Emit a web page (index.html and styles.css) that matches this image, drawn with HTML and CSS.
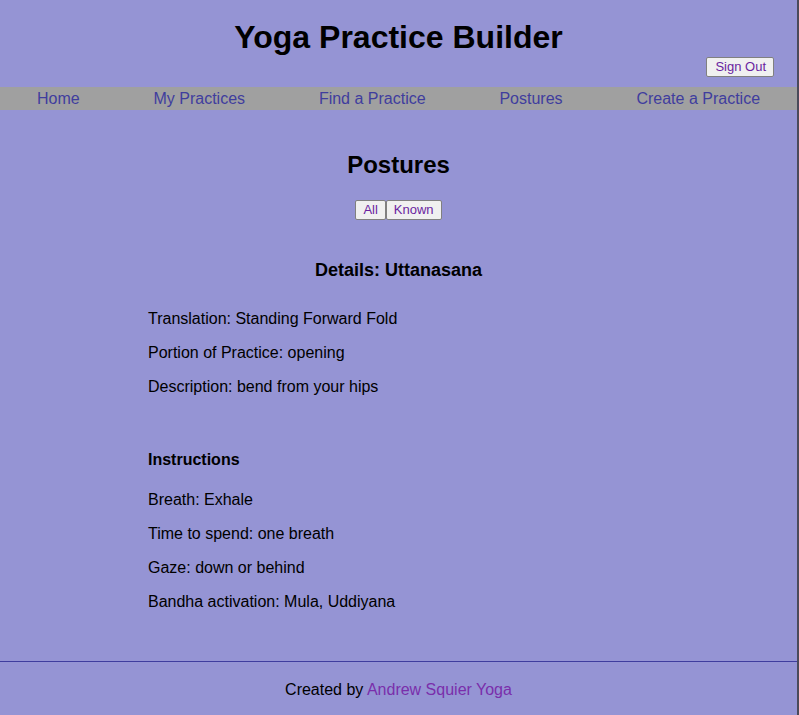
FILE: index.html
```html
<!DOCTYPE html>
<html>
<head>
<meta charset="utf-8">
<title>Yoga Practice Builder</title>
<link rel="stylesheet" href="styles.css">
</head>
<body>
<div class="page">
  <header class="header">
    <h1 class="title">Yoga Practice Builder</h1>
    <div class="account"><button class="btn btn-wide">Sign Out</button></div>
  </header>
  <nav class="nav">
    <a class="nav-link" href="#">Home</a>
    <a class="nav-link" href="#">My Practices</a>
    <a class="nav-link" href="#">Find a Practice</a>
    <a class="nav-link" href="#">Postures</a>
    <a class="nav-link" href="#">Create a Practice</a>
  </nav>
  <main class="main">
    <h2 class="page-title">Postures</h2>
    <div class="filters"><button class="btn">All</button><button class="btn">Known</button></div>
    <section class="details">
      <h3 class="details-title">Details: Uttanasana</h3>
      <p class="line">Translation: Standing Forward Fold</p>
      <p class="line">Portion of Practice: opening</p>
      <p class="line">Description: bend from your hips</p>
      <h4 class="sub-title">Instructions</h4>
      <p class="line">Breath: Exhale</p>
      <p class="line">Time to spend: one breath</p>
      <p class="line">Gaze: down or behind</p>
      <p class="line">Bandha activation: Mula, Uddiyana</p>
    </section>
  </main>
  <footer class="footer">
    <span>Created by <a class="footer-link" href="#">Andrew Squier Yoga</a></span>
  </footer>
</div>
</body>
</html>
```
FILE: styles.css
```css
html, body {
  margin: 0;
  padding: 0;
  background: #9594d4;
}
body {
  font-family: "Liberation Sans", Arial, sans-serif;
  color: #000;
  font-size: 16px;
  height: 715px;
  overflow: hidden;
}
.page {
  border-right: 2px solid #4a4a5a;
  min-height: 715px;
  box-sizing: border-box;
  display: flex;
  flex-direction: column;
}
.header {
  display: flex;
  flex-direction: column;
}
.title {
  margin: 19px 0 0;
  font-size: 32px;
  line-height: 37px;
  text-align: center;
  font-weight: bold;
}
.account {
  display: flex;
  justify-content: flex-end;
  align-items: flex-start;
  padding-right: 23px;
  padding-top: 1px;
  height: 30px;
}
.btn {
  font-family: "Liberation Sans", Arial, sans-serif;
  font-size: 13px;
  color: #6a1fa0;
  background: #f0f0f0;
  border: 1px solid #808080;
  border-radius: 2px;
  padding: 1px 7px;
  height: 20px;
  line-height: 16px;
  margin: 0;
}
.btn-wide {
  padding: 1px 7px 1px 8px;
}
.nav {
  background: #a0a0a0;
  display: flex;
  justify-content: space-around;
  height: 23px;
  align-items: center;
}
.nav-link {
  color: #3f3d9e;
  text-decoration: none;
  font-size: 16px;
}
.main {
  flex: 1;
  padding: 0 148px;
}
.page-title {
  margin: 41px 0 0;
  font-size: 24px;
  line-height: 28px;
  text-align: center;
}
.filters {
  display: flex;
  justify-content: center;
  margin-top: 21px;
}
.details-title {
  margin: 40px 0 0;
  font-size: 18px;
  line-height: 21px;
  text-align: center;
}
.line {
  margin: 16px 0 0;
  line-height: 18px;
}
.details-title + .line {
  margin-top: 29px;
}
.sub-title {
  margin: 55px 0 0;
  font-size: 16px;
  line-height: 18px;
}
.sub-title + .line {
  margin-top: 22px;
}
.footer {
  border-top: 1px solid #3f3d9e;
  height: 54px;
  display: flex;
  align-items: center;
  justify-content: center;
  box-sizing: border-box;
  padding-top: 2px;
}
.footer-link {
  color: #7a2eab;
  text-decoration: none;
}
```
